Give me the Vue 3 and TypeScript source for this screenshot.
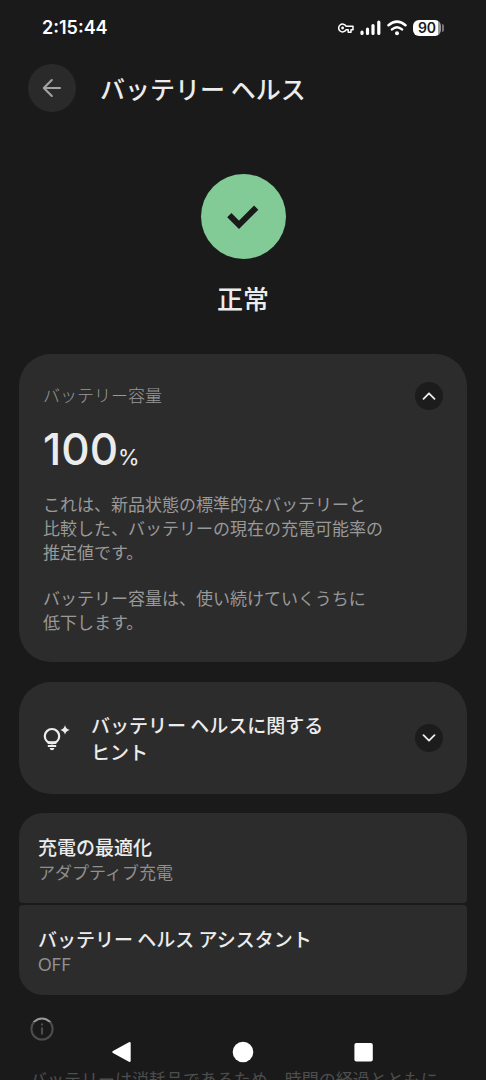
<script setup lang="ts">
import { ref } from 'vue'

interface Setting {
  title: string
  value: string
}

const capacityOpen = ref<boolean>(true)
const tipsOpen = ref<boolean>(false)

const settings: Setting[] = [
  { title: '充電の最適化', value: 'アダプティブ充電' },
  { title: 'バッテリー ヘルス アシスタント', value: 'OFF' },
]
</script>

<template>
  <div class="screen">
    <div class="status">
      <time class="clock">2:15:44</time>
      <div class="status-icons">
        <svg width="16" height="12" viewBox="0 0 16 12" aria-hidden="true">
          <path d="M8 4.2A3.9 3.9 0 1 0 8 7.8H10.2V10.2H13V7.8H15V4.2Z" fill="none" stroke="#fff" stroke-width="1.5" stroke-linejoin="round" />
          <circle cx="4.6" cy="6" r="1.4" fill="#fff" />
        </svg>
        <svg width="21" height="16" viewBox="0 0 21 16" aria-hidden="true">
          <path d="M2 12.2V13.5M7.5 9.2V13.5M13 5.6V13.5M18.8 2V13.5" stroke="#fff" stroke-width="3.2" stroke-linecap="round" />
        </svg>
        <svg width="20" height="16" viewBox="0 0 20 16" aria-hidden="true">
          <path d="M1.5 5.2Q10-2 18.5 5.2M5 9.4Q10 5 15 9.4" fill="none" stroke="#fff" stroke-width="2.5" stroke-linecap="round" />
          <circle cx="10" cy="13.2" r="2" fill="#fff" />
        </svg>
        <div class="battery">
          <span class="battery-level">90</span>
          <span class="battery-tip"></span>
        </div>
      </div>
    </div>

    <header class="header">
      <button class="back" type="button" aria-label="戻る">
        <svg width="20" height="20" viewBox="0 0 20 20" aria-hidden="true">
          <path d="M18 10H2M9.8 2L1.8 10L9.8 18" fill="none" stroke="#a3a3a3" stroke-width="2.1" stroke-linecap="round" stroke-linejoin="round" />
        </svg>
      </button>
      <h1 class="title">バッテリー ヘルス</h1>
    </header>

    <main class="content">
      <section class="hero">
        <div class="badge">
          <svg width="34" height="28" viewBox="0 0 34 28" aria-hidden="true">
            <path d="M3.3 12.2L13 21.8L30.2 4.6" fill="none" stroke="#1a1a1a" stroke-width="6" />
          </svg>
        </div>
        <p class="state">正常</p>
      </section>

      <section class="card capacity">
        <div class="capacity-head">
          <h2 class="label">バッテリー容量</h2>
          <button class="toggle" type="button" aria-label="バッテリー容量の詳細" :aria-expanded="capacityOpen" @click="capacityOpen = !capacityOpen">
            <svg :class="{ flipped: !capacityOpen }" width="14" height="8" viewBox="0 0 14 8" aria-hidden="true">
              <path d="M1.5 6.8L7 1.3L12.5 6.8" fill="none" stroke="#ececec" stroke-width="1.8" stroke-linecap="round" stroke-linejoin="round" />
            </svg>
          </button>
        </div>
        <p class="percent">100<span class="unit">%</span></p>
        <div v-if="capacityOpen" class="details">
          <p>これは、新品状態の標準的なバッテリーと<br />比較した、バッテリーの現在の充電可能率の<br />推定値です。</p>
          <p>バッテリー容量は、使い続けていくうちに<br />低下します。</p>
        </div>
      </section>

      <button class="card tips" type="button" :aria-expanded="tipsOpen" @click="tipsOpen = !tipsOpen">
        <svg class="bulb" width="27" height="28" viewBox="0 0 27 28" aria-hidden="true">
          <circle cx="9" cy="12.2" r="7.2" fill="none" stroke="#ececec" stroke-width="2.2" />
          <path d="M4.6 17.2H13.4V20H4.6Z" fill="#ececec" />
          <path d="M4.8 22H13.2" stroke="#ececec" stroke-width="2" />
          <path d="M6.6 24H11.4Q11 26.2 9 26.2T6.6 24Z" fill="#ececec" />
          <path d="M22 1Q22.7 5 26.7 5.9Q22.7 6.8 22 10.8Q21.3 6.8 17.3 5.9Q21.3 5 22 1Z" fill="#ececec" />
        </svg>
        <span class="tips-title">バッテリー ヘルスに関する<br />ヒント</span>
        <span class="toggle">
          <svg :class="{ flipped: !tipsOpen }" width="14" height="8" viewBox="0 0 14 8" aria-hidden="true">
            <path d="M1.5 6.8L7 1.3L12.5 6.8" fill="none" stroke="#ececec" stroke-width="1.8" stroke-linecap="round" stroke-linejoin="round" />
          </svg>
        </span>
      </button>

      <div class="group">
        <button v-for="item in settings" :key="item.title" class="row" type="button">
          <span class="row-title">{{ item.title }}</span>
          <span class="row-value">{{ item.value }}</span>
        </button>
      </div>

      <footer class="note">
        <svg width="24" height="24" viewBox="0 0 24 24" aria-hidden="true">
          <circle cx="12" cy="12" r="10.6" fill="none" stroke="#9a9a9a" stroke-width="2" />
          <path d="M12 10.6V17.6M12 6.4V8.6" stroke="#9a9a9a" stroke-width="2.1" />
        </svg>
        <p>バッテリーは消耗品であるため、時間の経過とともに</p>
      </footer>
    </main>

    <nav class="navbar">
      <button type="button" aria-label="前の画面">
        <svg width="22" height="22" viewBox="0 0 22 22" aria-hidden="true">
          <path d="M2.5 11L18.5 2.2V19.8Z" fill="#fff" stroke="#fff" stroke-width="2.4" stroke-linejoin="round" />
        </svg>
      </button>
      <button type="button" aria-label="ホーム">
        <svg width="22" height="22" viewBox="0 0 22 22" aria-hidden="true">
          <circle cx="11" cy="11" r="10.3" fill="#fff" />
        </svg>
      </button>
      <button type="button" aria-label="最近のアプリ">
        <svg width="22" height="22" viewBox="0 0 22 22" aria-hidden="true">
          <rect x="1.4" y="2" width="18.4" height="18.4" rx="2" fill="#fff" />
        </svg>
      </button>
    </nav>
  </div>
</template>

<style>
body {
  background: #1a1a1a;
}
</style>

<style scoped>
.screen {
  height: 100vh;
  overflow: hidden;
  position: relative;
  background: #1a1a1a;
  color: #ececec;
  font-family: Lato, "Noto Sans CJK JP", sans-serif;
}

h1,
h2,
p {
  margin: 0;
}

button {
  border: 0;
  padding: 0;
  color: inherit;
  font-family: inherit;
  text-align: left;
  cursor: pointer;
}

svg {
  display: block;
  flex: none;
}

.status {
  display: flex;
  align-items: center;
  justify-content: space-between;
  height: 56px;
  padding: 0 42px;
  color: #fff;
}

.clock {
  font: 600 18px/24px Inter, sans-serif;
}

.status-icons {
  display: flex;
  align-items: center;
  gap: 6px;
}

.battery {
  display: flex;
  align-items: center;
  gap: 1px;
}

.battery-level {
  width: 28px;
  border-radius: 6px;
  background: linear-gradient(to right, #fff 90%, #999 90%);
  color: #1a1a1a;
  font: 600 14px/16px Inter, sans-serif;
  text-align: center;
}

.battery-tip {
  width: 2px;
  height: 8px;
  border-radius: 0 2px 2px 0;
  background: #777;
}

.header {
  display: flex;
  align-items: center;
  gap: 24px;
  padding: 8px 28px 0;
}

.back {
  display: grid;
  place-items: center;
  width: 48px;
  height: 48px;
  border-radius: 50%;
  background: #2a2a2a;
}

.title {
  font-family: "Noto Sans CJK JP", sans-serif;
  font-size: 25px;
  font-weight: 500;
  line-height: 40px;
}

.content {
  padding: 0 19px;
}

.hero {
  display: flex;
  flex-direction: column;
  align-items: center;
  gap: 20px;
  padding: 62px 0 35px;
}

.badge {
  display: grid;
  place-items: center;
  width: 85px;
  height: 85px;
  border-radius: 50%;
  background: #82cb96;
}

.state {
  font-size: 26px;
  font-weight: 500;
  line-height: 40px;
}

.card {
  border-radius: 32px;
  background: #2c2c2c;
}

.capacity {
  padding: 28px 24px;
}

.capacity-head {
  display: flex;
  align-items: center;
  justify-content: space-between;
}

.label {
  color: #999;
  font-size: 17px;
  font-weight: 300;
  line-height: 28px;
}

.toggle {
  display: grid;
  place-items: center;
  flex: none;
  width: 28px;
  height: 28px;
  border-radius: 50%;
  background: #1c1c1c;
}

.flipped {
  transform: rotate(180deg);
}

.percent {
  padding: 13px 0 17px;
  font-family: Inter, sans-serif;
  font-size: 44px;
  font-weight: 500;
  line-height: 52px;
}

.unit {
  font-size: 22px;
  font-weight: 400;
  line-height: 22px;
}

.details {
  display: grid;
  gap: 22px;
  color: #999;
  font-family: "Noto Sans CJK JP", sans-serif;
  font-size: 17px;
  line-height: 24px;
}

.tips {
  display: flex;
  align-items: center;
  width: 100%;
  margin-top: 20px;
  padding: 29px 24px;
}

.tips-title {
  flex: 1;
  margin-left: 21px;
  font-family: "Noto Sans CJK JP", sans-serif;
  font-size: 19px;
  font-weight: 500;
  line-height: 27px;
}

.group {
  display: grid;
  gap: 2px;
  margin-top: 19px;
  border-radius: 24px;
  overflow: hidden;
}

.row {
  display: grid;
  padding: 20px 19px 18px;
  border-radius: 4px;
  background: #2c2c2c;
}

.row-title {
  font-family: "Noto Sans CJK JP", sans-serif;
  font-size: 19px;
  font-weight: 500;
  line-height: 28px;
}

.row-value {
  color: #8f8f8f;
  font-size: 17px;
  font-weight: 400;
  line-height: 24px;
}

.note {
  display: grid;
  gap: 27px;
  padding: 22px 11px 0;
  color: #999;
  font-size: 17px;
  line-height: 24px;
  white-space: nowrap;
}

.navbar {
  position: absolute;
  inset: auto 0 0;
  display: flex;
  justify-content: center;
  gap: 99px;
  padding: 19px 0 17px;
  background: rgba(26, 26, 26, 0.6);
}

.navbar button {
  background: none;
}
</style>
